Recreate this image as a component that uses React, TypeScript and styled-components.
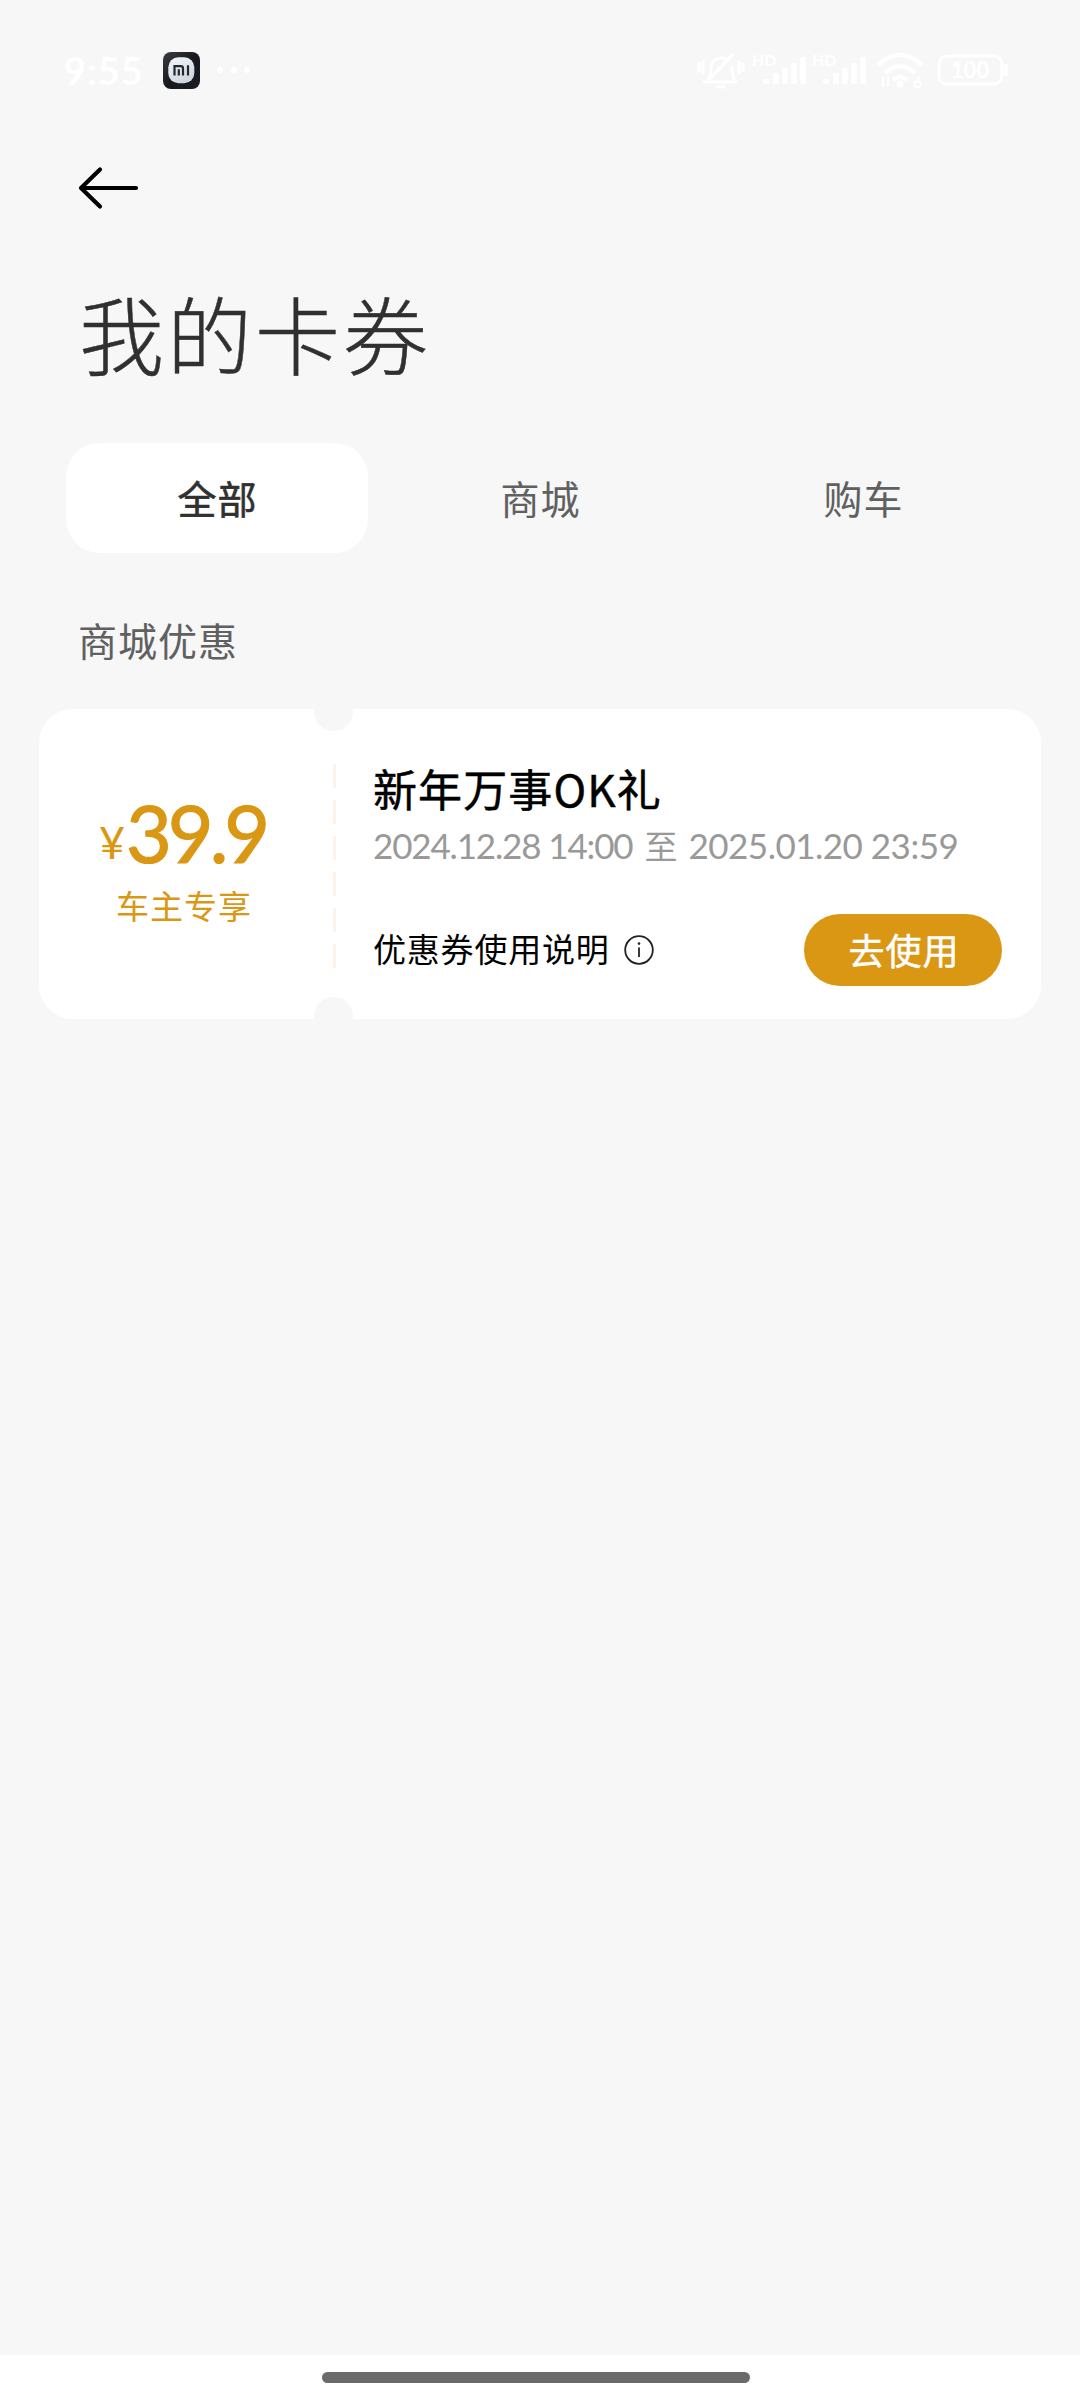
import React from "react";
import styled, { createGlobalStyle } from "styled-components";

const PAGE = "#f7f7f7";
const GOLD = "#da9714";

const GlobalStyle = createGlobalStyle`
  html, body { margin: 0; padding: 0; background: ${PAGE}; }
  * { box-sizing: border-box; }
  button { border: 0; padding: 0; background: none; font: inherit; color: inherit; }
`;

const Screen = styled.div`
  width: 1080px;
  height: 2400px;
  display: flex;
  flex-direction: column;
  overflow: hidden;
  background: ${PAGE};
  font-family: "Noto Sans CJK SC", sans-serif;
  white-space: nowrap;
`;

const StatusBar = styled.div`
  height: 140px;
  padding: 0 72px 0 64px;
  display: flex;
  align-items: center;
  justify-content: space-between;
  color: #fff;
`;

const StatusGroup = styled.div`
  display: flex;
  align-items: center;
`;

const Clock = styled.span`
  width: 99px;
  font: 700 38px/40px Lato, sans-serif;
  letter-spacing: 1px;
`;

const Dots = styled.svg`
  margin-left: 14px;
`;

const Header = styled.header`
  padding: 22px 80px 0;
  display: flex;
  flex-direction: column;
`;

const BackButton = styled.button`
  width: 64px;
  height: 52px;
  margin-left: -3.5px;
  display: flex;
`;

const Title = styled.h1`
  margin: 56px 0 0 -1px;
  font-size: 85px;
  line-height: 124px;
  font-weight: 300;
  letter-spacing: 3px;
  color: #303030;
  -webkit-text-stroke: 0.5px #303030;
`;

const Tabs = styled.nav`
  margin: 49px 66px 0;
  display: grid;
  grid-template-columns: repeat(3, 302px);
  gap: 21px;
`;

const Tab = styled.button<{ $active?: boolean }>`
  height: 110px;
  padding: 0 0 2px 1px;
  border-radius: 34px;
  background: ${(p) => (p.$active ? "#fff" : "transparent")};
  color: ${(p) => (p.$active ? "#303030" : "#606060")};
  font-size: 39px;
  line-height: 108px;
  font-weight: 400;
  letter-spacing: 1px;
  text-align: center;
  -webkit-text-stroke: ${(p) => (p.$active ? "0.6px #303030" : "0")};
`;

const SectionTitle = styled.h2`
  margin: 58px 0 0 78px;
  font-size: 39px;
  line-height: 56px;
  font-weight: 400;
  letter-spacing: 1px;
  color: #606060;
`;

const Coupon = styled.article`
  position: relative;
  margin: 42px 39px 0;
  height: 310px;
  display: flex;
  border-radius: 34px;
  background: #fff;
`;

const Notch = styled.i<{ $edge: "top" | "bottom" }>`
  position: absolute;
  left: 275px;
  ${(p) => p.$edge}: -17px;
  width: 39px;
  height: 39px;
  border-radius: 50%;
  background: ${PAGE};
`;

const PricePane = styled.div`
  width: 294px;
  padding: 82px 4px 0 0;
  display: flex;
  flex-direction: column;
  align-items: center;
  color: ${GOLD};
`;

const Price = styled.div`
  height: 90px;
  margin-right: 3px;
  display: flex;
  align-items: baseline;
  font-family: Lato, sans-serif;
  font-size: 79px;
  line-height: 84px;
  font-weight: 400;
  letter-spacing: -4px;
  -webkit-text-stroke: 1.2px ${GOLD};
`;

const Currency = styled.span`
  margin-right: 5px;
  font-size: 45px;
  line-height: 50px;
  transform: translateY(-4px);
  -webkit-text-stroke: 0;
`;

const Audience = styled.div`
  font-size: 33px;
  line-height: 48px;
  letter-spacing: 1px;
`;

const Perforation = styled.div`
  width: 3px;
  height: 204px;
  margin-top: 55px;
  background: repeating-linear-gradient(#fef2ea 0 24px, transparent 24px 36px);
`;

const Details = styled.div`
  flex: 1;
  padding: 49px 39px 0 37px;
  display: flex;
  flex-direction: column;
`;

const CouponName = styled.h3`
  margin: 0;
  font-size: 44px;
  line-height: 60px;
  font-weight: 400;
  letter-spacing: 1.1px;
  color: #000;
  -webkit-text-stroke: 0.5px #000;
`;

const Period = styled.div`
  margin-top: 1px;
  display: flex;
  align-items: baseline;
  font-family: Lato, sans-serif;
  font-size: 35px;
  line-height: 52px;
  color: #999;
`;

const Moment = styled.time<{ $tracking: number }>`
  letter-spacing: ${(p) => p.$tracking}px;
`;

const Until = styled.span`
  margin: 0 11px 0 12px;
  font-family: "Noto Sans CJK SC", sans-serif;
  font-size: 33px;
  line-height: 48px;
`;

const Actions = styled.div`
  margin-top: 43px;
  display: flex;
  align-items: center;
  justify-content: space-between;
`;

const Guide = styled.button`
  display: flex;
  align-items: center;
  gap: 14px;
  color: #000;
`;

const GuideLabel = styled.span`
  padding-bottom: 3px;
  font-size: 33px;
  line-height: 45px;
  letter-spacing: 0.8px;
`;

const UseButton = styled.button`
  width: 198px;
  height: 72px;
  padding: 0 0 2px 2px;
  border-radius: 36px;
  background: ${GOLD};
  color: #fff;
  font-size: 36px;
  line-height: 70px;
  font-weight: 400;
  letter-spacing: 1px;
  text-align: center;
  -webkit-text-stroke: 0.5px #fff;
`;

const NavBar = styled.footer`
  height: 45px;
  margin-top: auto;
  padding-top: 17px;
  display: flex;
  justify-content: center;
  background: #fff;
`;

const NavHandle = styled.div`
  width: 428px;
  height: 11px;
  margin-right: 8px;
  border-radius: 6px;
  background: #6a6a6a;
`;

const AppIcon = () => (
  <svg width="37" height="37" viewBox="0 0 37 37">
    <defs>
      <linearGradient id="shell" x1="0" y1="0" x2="1" y2="1">
        <stop offset="0" stopColor="#3a3d43" />
        <stop offset="0.5" stopColor="#17191e" />
        <stop offset="1" stopColor="#1b1d22" />
      </linearGradient>
      <linearGradient id="plate" x1="0" y1="0" x2="0.5" y2="1">
        <stop offset="0" stopColor="#f4f7fa" />
        <stop offset="1" stopColor="#cfd6df" />
      </linearGradient>
    </defs>
    <rect width="37" height="37" rx="8" fill="url(#shell)" />
    <rect x="5.300" y="5.300" width="26" height="26" rx="10" fill="url(#plate)" />
    <path
      d="M11.500 23.500v-9.400h6.200q2.300 0 2.300 2.300v7.100M15.800 17.200v6.300M25 13.200v10.300"
      fill="none"
      stroke="#24272d"
      strokeWidth="2.200"
    />
  </svg>
);

const SignalBars = ({ x }: { x: number }) => (
  <g transform={`translate(${x} 0)`}>
    <text x="-6" y="18" fontFamily="Lato, sans-serif" fontSize="16" fontWeight="700" fill="#fff">
      HD
    </text>
    <path d="M8 36v-5M18 36v-11M27 36v-16M36 36v-21M45 36v-27" stroke="#fff" strokeWidth="5.500" />
  </g>
);

const StatusIcons = () => (
  <svg width="312" height="44" viewBox="0 0 312 44" fill="none" stroke="#fff" strokeWidth="3">
    <path d="M7 34h34M11 33q4-5 4-14a10 10 0 0 1 17-6M36 17q0 11 3 16M11 34L37 6M20 39h9M3 14v10M7 12v14M43 12v14M47 14v10" />
    <g stroke="none">
      <SignalBars x={62} />
      <SignalBars x={122} />
    </g>
    <path d="M182 17q22-20 44 0M189 25q15-13 30 0M197 32q7-6 14 0" strokeWidth="4.500" />
    <circle cx="204" cy="36" r="3.500" fill="#fff" stroke="none" />
    <text x="217" y="40" fontFamily="Lato, sans-serif" fontSize="16" fontWeight="700" fill="#fff" stroke="none">
      6
    </text>
    <path d="M187 29v10M192 29v10" strokeWidth="2" />
    <rect x="243" y="8" width="63" height="28" rx="8" />
    <path d="M310 16v12" strokeWidth="4" />
    <text x="274" y="30" textAnchor="middle" fontFamily="Lato, sans-serif" fontSize="22" fontWeight="700" fill="#fff" stroke="none">
      100
    </text>
  </svg>
);

const BackIcon = () => (
  <svg width="64" height="52" viewBox="0 0 64 52" fill="none" stroke="#000" strokeWidth="4.200" strokeLinecap="round" strokeLinejoin="round">
    <path d="M59 26H4M23 7.500L4 26l19 18.500" />
  </svg>
);

const InfoIcon = () => (
  <svg width="30" height="30" viewBox="0 0 30 30" fill="none" stroke="#222" strokeWidth="1.800">
    <circle cx="15" cy="15" r="13.800" />
    <path d="M15 12.500v9.500" />
    <circle cx="15" cy="8.600" r="1.300" fill="#222" stroke="none" />
  </svg>
);

const tabs = ["全部", "商城", "购车"];

export default function App() {
  return (
    <Screen>
      <GlobalStyle />
      <StatusBar>
        <StatusGroup>
          <Clock>9:55</Clock>
          <AppIcon />
          <Dots width="40" height="10" viewBox="0 0 40 10" fill="#fff">
            <circle cx="6" cy="5" r="3" />
            <circle cx="20" cy="5" r="3" />
            <circle cx="33" cy="5" r="3" />
          </Dots>
        </StatusGroup>
        <StatusIcons />
      </StatusBar>
      <Header>
        <BackButton aria-label="返回">
          <BackIcon />
        </BackButton>
        <Title>我的卡券</Title>
      </Header>
      <Tabs>
        {tabs.map((label, i) => (
          <Tab key={label} $active={i === 0}>
            {label}
          </Tab>
        ))}
      </Tabs>
      <SectionTitle>商城优惠</SectionTitle>
      <Coupon>
        <PricePane>
          <Price>
            <Currency>¥</Currency>39.9
          </Price>
          <Audience>车主专享</Audience>
        </PricePane>
        <Perforation />
        <Details>
          <CouponName>新年万事OK礼</CouponName>
          <Period>
            <Moment $tracking={-1.15}>2024.12.28 14:00</Moment>
            <Until>至</Until>
            <Moment $tracking={-0.5}>2025.01.20 23:59</Moment>
          </Period>
          <Actions>
            <Guide>
              <GuideLabel>优惠券使用说明</GuideLabel>
              <InfoIcon />
            </Guide>
            <UseButton>去使用</UseButton>
          </Actions>
        </Details>
        <Notch $edge="top" />
        <Notch $edge="bottom" />
      </Coupon>
      <NavBar>
        <NavHandle />
      </NavBar>
    </Screen>
  );
}
